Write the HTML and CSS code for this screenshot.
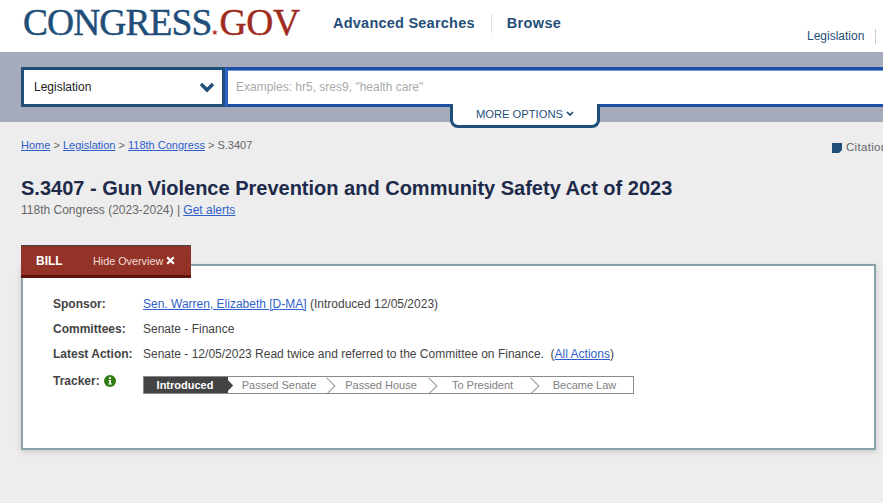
FILE: index.html
```html
<!DOCTYPE html>
<html lang="en">
<head>
<meta charset="utf-8">
<title>S.3407 - Congress.gov</title>
<link rel="stylesheet" href="styles.css">
</head>
<body>
<header class="top">
  <a class="logo"><span class="logo-blue">CONGRESS</span><span class="logo-star">★</span><span class="logo-red">GOV</span></a>
  <nav class="main-nav">
    <a class="main-link">Advanced Searches</a>
    <a class="main-link main-link-last">Browse</a>
  </nav>
  <nav class="sub-nav"><a class="sub-link">Legislation</a></nav>
</header>
<section class="search-band">
  <div class="search-row">
    <div class="select">
      <span>Legislation</span>
      <svg class="select-chevron" width="16" height="11" viewBox="0 0 16 11"><path d="M2 2l6 6 6-6" fill="none" stroke="#1f4e79" stroke-width="3.4"/></svg>
    </div>
    <div class="input">Examples: hr5, sres9, "health care"</div>
  </div>
  <div class="more">MORE OPTIONS <svg width="8" height="6" viewBox="0 0 8 6"><path d="M1 1l3 3 3-3" fill="none" stroke="#1f4e79" stroke-width="1.7"/></svg></div>
</section>
<main class="content">
  <div class="crumb-row">
    <div class="crumbs"><a>Home</a> &gt; <a>Legislation</a> &gt; <a>118th Congress</a> &gt; S.3407</div>
    <div class="citation"><svg width="10" height="10" viewBox="0 0 10 10"><path d="M0 0h10v7l-3 3H0z" fill="#1f4e79"/></svg>Citation</div>
  </div>
  <h1 class="title">S.3407 - Gun Violence Prevention and Community Safety Act of 2023</h1>
  <p class="subtitle">118th Congress (2023-2024) | <a>Get alerts</a></p>
  <div class="tab"><b class="tab-bill">BILL</b><span class="tab-hide">Hide Overview</span><svg width="9" height="9" viewBox="0 0 9 9"><path d="M1.2 1.2l6.6 6.6M7.8 1.2L1.2 7.8" stroke="#fff" stroke-width="2.2"/></svg></div>
  <section class="card">
    <div class="row"><div class="label">Sponsor:</div><div><a>Sen. Warren, Elizabeth [D-MA]</a> (Introduced 12/05/2023)</div></div>
    <div class="row"><div class="label">Committees:</div><div>Senate - Finance</div></div>
    <div class="row"><div class="label">Latest Action:</div><div>Senate - 12/05/2023 Read twice and referred to the Committee on Finance.&nbsp; (<a>All Actions</a>)</div></div>
    <div class="row row-tracker">
      <div class="label">Tracker: <svg class="info" width="12" height="12" viewBox="0 0 12 12"><circle cx="6" cy="6" r="6" fill="#2f7d12"/><rect x="5" y="2.2" width="2" height="1.8" fill="#fff"/><path d="M4.5 5h2.5v3.6h.8v1H4.4v-1h.9V6h-.8z" fill="#fff"/></svg></div>
      <ol class="tracker">
        <li class="step step-current">Introduced</li>
        <li class="step step-2">Passed Senate</li>
        <li class="step step-3">Passed House</li>
        <li class="step step-4">To President</li>
        <li class="step step-5">Became Law</li>
      </ol>
    </div>
  </section>
</main>
</body>
</html>
```
FILE: styles.css
```css
* { box-sizing: border-box; }
html, body { margin: 0; height: 503px; overflow: hidden; }
body { width: 883px; background: #ededee; font-family: "Liberation Sans", Arial, sans-serif; font-size: 12px; color: #444; }
a { color: #2f5fc9; text-decoration: underline; }
.top { height: 52px; background: #fff; position: relative; display: flex; }
.logo { margin: 1px 0 0 23px; height: 44px; font-family: "Liberation Serif", serif; font-size: 37.5px; line-height: 44px; letter-spacing: -.95px; white-space: nowrap; text-decoration: none; width: 277px; flex: none; display: flex; -webkit-text-stroke: .45px; }
.logo-blue { color: #1f4e79; }
.logo-red { color: #9e2a20; letter-spacing: -.3px; }
.logo-star { color: #b0281c; font-size: 8px; margin: 10px 1px 0 0; letter-spacing: 0; font-family: "DejaVu Sans", sans-serif; -webkit-text-stroke: 0; }
.main-nav { display: flex; margin: 14px 0 0 33px; height: 19px; }
.main-link { color: #1f4e79; font-size: 14.5px; font-weight: 700; line-height: 19px; text-decoration: none; padding-right: 16px; border-right: 1px solid #ddd; letter-spacing: .23px; }
.main-link-last { border: 0; padding: 0 0 0 15px; letter-spacing: .35px; }
.sub-nav { position: absolute; right: 0; top: 29px; height: 15px; width: 69px; border-right: 1px solid #ccc; margin-right: 7px; }
.sub-link { color: #1f4e79; font-size: 12px; line-height: 15px; text-decoration: none; display: block; }
.search-band { height: 70px; background: #a6abbc; padding: 15px 0 0 21px; position: relative; }
.search-row { display: flex; height: 40px; width: 900px; }
.select { width: 204px; background: #fff; border: 3px solid #1f4e79; display: flex; align-items: center; justify-content: space-between; padding: 0 7px 0 10px; color: #222; }
.input { flex: 1; background: #fff; border: 3px solid #1c50a2; box-shadow: inset 0 1px 0 #6f9ae0; border-left-color: #2c64c6; display: flex; align-items: center; padding-left: 8px; color: #aaa; }
.more { position: absolute; left: 450px; top: 52px; width: 150px; height: 24px; background: #fff; border: 3px solid #1f4e79; border-top: 0; border-radius: 0 0 8px 8px; color: #1f4e79; font-size: 11.2px; text-align: center; line-height: 20px; }
.more svg { vertical-align: 1px; }
.content { padding: 0 0 0 21px; }
.crumb-row { display: flex; justify-content: space-between; height: 54px; padding-top: 17px; line-height: 13px; font-size: 11px; color: #666; white-space: nowrap; }
.citation { width: 51px; overflow: hidden; color: #666; display: flex; align-items: center; gap: 4px; height: 13px; margin-top: 2px; font-size: 11.5px; letter-spacing: .3px; flex: none; }
.citation svg { flex: none; }
.title { margin: 0; font-size: 20px; line-height: 24px; font-weight: 700; color: #1e2a4a; white-space: nowrap; }
.subtitle { margin: 2px 0 0; font-size: 12px; line-height: 16px; color: #666; }
.tab { margin-top: 27px; width: 170px; height: 33px; background: #933327; border-top: 1px solid #444; border-bottom: 3px solid #5d140c; color: #fff; display: flex; align-items: center; position: relative; z-index: 1; padding-left: 15px; }
.tab-bill { font-size: 12px; width: 57px; }
.tab-hide { font-size: 10.8px; margin-right: 3px; color: #f0dedb; }
.card { margin-top: -14px; width: 855px; height: 186px; background: #fff; border: 2px solid #8aa1ac; box-shadow: 0 2px 6px rgba(0,0,0,.15); padding: 26px 0 0 30px; }
.row { display: flex; height: 25px; line-height: 25px; white-space: nowrap; }
.label { width: 90px; flex: none; font-weight: 700; }
.row-tracker { height: 30px; padding-top: 2px; }
.row-tracker .label { line-height: 25px; }
.info { vertical-align: -2px; margin-left: 1px; }
.tracker { list-style: none; margin: 7px 0 0; padding: 0; display: flex; width: 491px; height: 18px; border: 1px solid #8a8a8a; background: #fff; font-size: 11px; line-height: 16px; color: #808080; }
.step { position: relative; text-align: center; flex: none; }
.step::after { content: ""; position: absolute; right: -2.5px; top: 2.5px; width: 11px; height: 11px; border-top: 1px solid #999; border-right: 1px solid #999; transform: rotate(45deg); z-index: 1; }
.step-current { width: 84px; background: #444; color: #fff; font-weight: 700; padding-right: 2px; }
.step-current::after { background: #444; border: 0; }
.step-2 { width: 102px; }
.step-3 { width: 102px; }
.step-4 { width: 102px; padding-right: 1px; }
.step-5 { flex: 1; padding-left: 2px; }
.step-5::after { display: none; }
```
